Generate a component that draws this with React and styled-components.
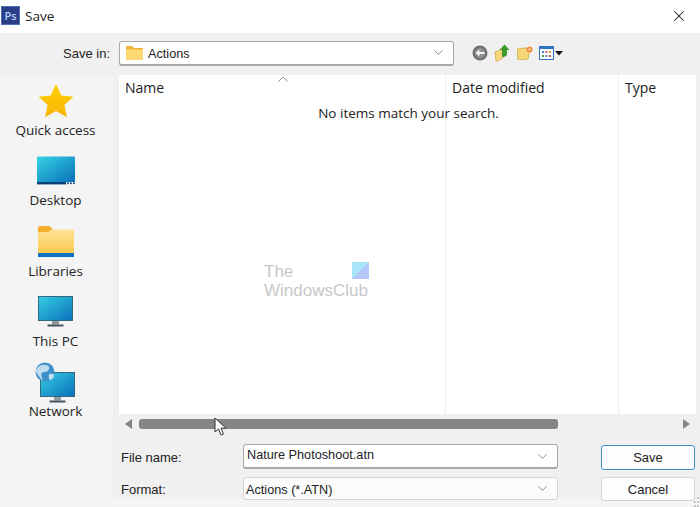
import React from 'react';
import styled, { createGlobalStyle } from 'styled-components';
import { ChevronDown, X } from 'lucide-react';

const GlobalStyle = createGlobalStyle`
  html, body {
    margin: 0;
    padding: 0;
    background: #f0f0f0;
  }
  * {
    box-sizing: border-box;
  }
`;

const Dialog = styled.div`
  width: 700px;
  height: 507px;
  display: flex;
  flex-direction: column;
  position: relative;
  overflow: hidden;
  background: #f0f0f0;
  color: #222;
  font-family: 'Open Sans', 'Liberation Sans', sans-serif;
  font-size: 13.5px;
`;

const TitleBar = styled.div`
  height: 33px;
  flex: none;
  display: flex;
  align-items: center;
  gap: 5px;
  padding: 0 12px 2px 1px;
  background: #fff;
`;

const AppIcon = styled.div`
  width: 19px;
  height: 19px;
  display: flex;
  align-items: center;
  justify-content: center;
  background: #2b3d86;
  border: 1px solid #4a6fb5;
  color: #b3d3ff;
  font-size: 11px;
  font-weight: 600;
  line-height: 1;
`;

const TitleText = styled.span`
  flex: 1;
  font-size: 13.5px;
`;

const CloseIcon = styled(X)`
  width: 18px;
  height: 18px;
  color: #222;
`;

const Toolbar = styled.div`
  height: 42px;
  flex: none;
  display: flex;
  align-items: center;
  padding-bottom: 2px;
`;

const RowLabel = styled.label`
  width: ${(p) => p.$width}px;
  flex: none;
  padding-top: ${(p) => p.$drop || 0}px;
  font-family: 'Liberation Sans', sans-serif;
  font-size: 13px;
  color: #222;
  text-align: ${(p) => p.$align || 'left'};
`;

const Combo = styled.div`
  width: ${(p) => p.$width}px;
  height: ${(p) => p.$height}px;
  flex: none;
  display: flex;
  align-items: center;
  gap: 5px;
  margin-left: ${(p) => p.$offset || 0}px;
  padding: 0 7px 0 ${(p) => p.$pad || 5}px;
  background: ${(p) => (p.$soft ? '#fbfbfb' : '#fff')};
  border: 1px solid ${(p) => (p.$soft ? '#d4d4d4' : '#a9a9a9')};
  border-bottom-width: ${(p) => (p.$soft ? 1 : 2)}px;
  border-radius: 3px;
  font-family: 'Liberation Sans', sans-serif;
  font-size: 12.7px;
  color: #222;
`;

const ComboText = styled.span`
  flex: 1;
  white-space: nowrap;
  padding-top: ${(p) => p.$top || 0}px;
  padding-bottom: ${(p) => p.$bottom || 0}px;
`;

const Chevron = styled(ChevronDown)`
  width: 15px;
  height: 15px;
  color: #666;
`;

const ToolIcons = styled.div`
  display: flex;
  align-items: center;
  gap: 6px;
  margin-left: 18px;
`;

const Body = styled.div`
  flex: 1;
  display: flex;
  min-height: 0;
`;

const Sidebar = styled.nav`
  width: 113px;
  flex: none;
  display: flex;
  flex-direction: column;
  background: #f4f4f4;
  padding: 6px 2px 0 0;
`;

const Place = styled.div`
  height: 70.3px;
  display: flex;
  flex-direction: column;
  align-items: center;
  color: #222;
  font-size: 13.5px;
  line-height: 18px;
`;

const PlaceGlyph = styled.div`
  height: 40px;
  display: flex;
  align-items: center;
  justify-content: center;
`;

const Main = styled.div`
  flex: 1;
  display: flex;
  flex-direction: column;
  padding-left: 6px;
  min-width: 0;
  background: linear-gradient(#f0f0f0 0 423px, #f4f4f4 423px);
`;

const FileList = styled.div`
  height: 339px;
  width: 577px;
  flex: none;
  display: grid;
  grid-template-columns: 326px 173px 78px;
  background: #fff;
  position: relative;
`;

const Column = styled.div`
  padding: 3px 0 0 6px;
  border-left: ${(p) => (p.$first ? 'none' : '1px solid #efefef')};
  font-size: 14px;
  line-height: 20px;
  color: #222;
`;

const SortCaret = styled.svg`
  position: absolute;
  left: 159px;
  top: 1px;
`;

const EmptyNote = styled.div`
  position: absolute;
  left: 0;
  right: 0;
  top: 28px;
  text-align: center;
  font-size: 13.5px;
  line-height: 20px;
  color: #222;
  transform: translateX(1px);
`;

const Scrollbar = styled.div`
  height: 19px;
  width: 577px;
  flex: none;
  display: flex;
  align-items: center;
  padding: 0 6px;
`;

const ScrollThumbTrack = styled.div`
  flex: 1;
  padding: 0 125px 0 7px;
`;

const ScrollThumb = styled.div`
  height: 10px;
  background: #858585;
  border-radius: 3px;
`;

const ScrollArrow = styled.div`
  width: 0;
  height: 0;
  border-top: 5px solid transparent;
  border-bottom: 5px solid transparent;
  ${(p) =>
    p.$right
      ? 'border-left: 7px solid #858585;'
      : 'border-right: 7px solid #858585;'}
`;

const Footer = styled.div`
  display: flex;
  padding-top: 11px;
`;

const FormRows = styled.div`
  width: 438px;
  display: flex;
  flex-direction: column;
  gap: 8px;
  padding-left: 2px;
`;

const FormRow = styled.div`
  display: flex;
  align-items: center;
`;

const Buttons = styled.div`
  margin-left: 44px;
  display: flex;
  flex-direction: column;
  gap: 7px;
  padding-top: 1px;
`;

const Button = styled.button`
  width: 94px;
  height: ${(p) => (p.$primary ? 25 : 24)}px;
  padding: 0;
  background: #fdfdfd;
  border: 1px solid ${(p) => (p.$primary ? '#3f8fc4' : '#d2d2d2')};
  border-radius: 3px;
  font-family: 'Liberation Sans', sans-serif;
  font-size: 13px;
  color: #222;
`;

const Watermark = styled.div`
  position: absolute;
  left: 264px;
  top: 262px;
  width: 104px;
  color: #c8c8c8;
  font-size: 17px;
  line-height: 19px;
  font-family: 'Liberation Sans', sans-serif;
  font-weight: 400;
`;

const WatermarkLogo = styled.svg`
  position: absolute;
  left: 88px;
  top: 0;
`;

const CursorIcon = styled.svg`
  position: absolute;
  left: 214px;
  top: 417px;
`;

const ResizeGrip = styled.svg`
  position: absolute;
  right: 0;
  bottom: 0;
`;

const Star = () => (
  <svg width="36" height="36" viewBox="0 0 36 36">
    <defs>
      <linearGradient id="starFill" x1="0" y1="0" x2="0" y2="1">
        <stop offset="0" stopColor="#ffd400" />
        <stop offset="1" stopColor="#f9b208" />
      </linearGradient>
    </defs>
    <path
      d="M18 1l5.300 11.400 12 1.300-8.900 8.200 2.500 12.300L18 27.900 7.100 34.200l2.500-12.300L.7 13.700l12-1.300z"
      fill="url(#starFill)"
    />
  </svg>
);

const DesktopGlyph = () => (
  <svg width="40" height="30" viewBox="0 0 40 30">
    <defs>
      <linearGradient id="desktopFill" x1="0" y1="0" x2="1" y2="1">
        <stop offset="0" stopColor="#35d3e6" />
        <stop offset="1" stopColor="#0a6fb8" />
      </linearGradient>
    </defs>
    <path d="M1 1.500Q1 .5 2 .5h36q1 0 1 1V26H1z" fill="url(#desktopFill)" />
    <rect x="1" y="26" width="29" height="2.400" fill="#0b3f77" />
    <rect x="31" y="26.400" width="1.700" height="1.700" fill="#0b3f77" />
    <rect x="34" y="26.400" width="1.700" height="1.700" fill="#0b3f77" />
    <rect x="37" y="26.400" width="1.700" height="1.700" fill="#0b3f77" />
  </svg>
);

const LibraryGlyph = () => (
  <svg width="36" height="32" viewBox="0 0 36 32">
    <defs>
      <linearGradient id="libFill" x1="0" y1="0" x2="0" y2="1">
        <stop offset="0" stopColor="#ffe39a" />
        <stop offset="1" stopColor="#fbc94f" />
      </linearGradient>
    </defs>
    <path d="M0 2q0-2 2-2h9l4 3-4 4H0z" fill="#f2b02c" />
    <path d="M0 6h10l4-2.500h21q1 0 1 1V27H0z" fill="url(#libFill)" />
    <rect y="27" width="36" height="4" fill="#0b72c4" />
  </svg>
);

const Monitor = ({ id }) => (
  <>
    <defs>
      <linearGradient id={id} x1="0" y1="0" x2="1" y2="1">
        <stop offset="0" stopColor="#35cfe2" />
        <stop offset="1" stopColor="#0a70ba" />
      </linearGradient>
    </defs>
    <rect x="0.500" y="0.500" width="34" height="24" fill={`url(#${id})`} stroke="#33677f" />
    <rect x="14" y="25" width="7" height="3.500" fill="#8e9aa3" />
    <rect x="9.500" y="28.500" width="16" height="2" fill="#46525a" />
  </>
);

const PcGlyph = () => (
  <svg width="35" height="31" viewBox="0 0 35 31">
    <Monitor id="pcFill" />
  </svg>
);

const NetworkGlyph = () => (
  <svg width="41" height="41" viewBox="0 0 41 41">
    <g transform="translate(5 10)">
      <Monitor id="netFill" />
    </g>
    <circle cx="10" cy="10" r="9.500" fill="#3f8fc9" />
    <path d="M3 5q4-3 8-2t3 4-5 3-2 6-4-3-2-5zM14 12q4-1 5 1t-3 5q-3 0-2-6z" fill="#d8ebf7" opacity="0.85" />
  </svg>
);

const FolderSmall = () => (
  <svg width="17" height="14" viewBox="0 0 17 14">
    <path d="M0 1q0-1 1-1h5l2 2h8q1 0 1 1v2H0z" fill="#eeb43a" />
    <rect y="3.500" width="17" height="10.500" rx="0.600" fill="#fdd873" />
  </svg>
);

const BackIcon = () => (
  <svg width="16" height="16" viewBox="0 0 16 16">
    <circle cx="8" cy="8" r="7.500" fill="#6e6e6e" />
    <circle cx="8" cy="8" r="5.400" fill="#8e8e8e" />
    <path d="M3.500 8l4-3.500V7h5v2h-5v2.500z" fill="#f4f4f4" />
  </svg>
);

const UpIcon = () => (
  <svg width="17" height="18" viewBox="0 0 17 18">
    <path d="M1 8l8-3v9l-7 3.500z" fill="#f6d777" stroke="#c9a33f" strokeWidth="0.700" />
    <path d="M8 13V6H5.500L10.500.5 15.500 6H13v4q0 3-5 3z" fill="#3f9a2d" />
  </svg>
);

const NewFolderIcon = () => (
  <svg width="16" height="14" viewBox="0 0 16 14">
    <path d="M0 3l8-1 5 1-2 10-10 1z" fill="#f6d777" stroke="#c9a33f" strokeWidth="0.700" />
    <circle cx="12.500" cy="3.500" r="3" fill="#ee8a3a" />
    <circle cx="12.500" cy="3.500" r="1.100" fill="#fff2d8" />
  </svg>
);

const ViewsIcon = () => (
  <svg width="24" height="14" viewBox="0 0 24 14">
    <rect x="0.500" y="0.500" width="14" height="13" fill="#fff" stroke="#2f74c0" />
    <rect x="0.500" y="0.500" width="14" height="2.500" fill="#2f74c0" />
    <rect x="3" y="5" width="2" height="2" fill="#3a7bd5" />
    <rect x="6.500" y="5" width="2" height="2" fill="#d55a9a" />
    <rect x="10" y="5" width="2" height="2" fill="#e0a030" />
    <rect x="3" y="9" width="2" height="2" fill="#42a050" />
    <rect x="6.500" y="9" width="2" height="2" fill="#3a7bd5" />
    <rect x="10" y="9" width="2" height="2" fill="#d05050" />
    <path d="M16 5h8l-4 4.500z" fill="#111" />
  </svg>
);

const places = [
  { label: 'Quick access', glyph: <Star /> },
  { label: 'Desktop', glyph: <DesktopGlyph /> },
  { label: 'Libraries', glyph: <LibraryGlyph /> },
  { label: 'This PC', glyph: <PcGlyph /> },
  { label: 'Network', glyph: <NetworkGlyph /> },
];

const App = () => {
  return (
    <>
      <GlobalStyle />
      <Dialog>
        <TitleBar>
          <AppIcon>Ps</AppIcon>
          <TitleText>Save</TitleText>
          <CloseIcon strokeWidth={1.4} />
        </TitleBar>

        <Toolbar>
          <RowLabel $width={110} $align="right">Save in:</RowLabel>
          <Combo $width={335} $height={25} $offset={9} $pad={6}>
            <FolderSmall />
            <ComboText $top={2}>Actions</ComboText>
            <Chevron strokeWidth={1.2} />
          </Combo>
          <ToolIcons>
            <BackIcon />
            <UpIcon />
            <NewFolderIcon />
            <ViewsIcon />
          </ToolIcons>
        </Toolbar>

        <Body>
          <Sidebar>
            {places.map((place) => (
              <Place key={place.label}>
                <PlaceGlyph>{place.glyph}</PlaceGlyph>
                {place.label}
              </Place>
            ))}
          </Sidebar>

          <Main>
            <FileList>
              <Column $first>Name</Column>
              <Column>Date modified</Column>
              <Column>Type</Column>
              <SortCaret width="10" height="6" viewBox="0 0 10 6">
                <path d="M.5 5.500L5 1l4.500 4.500" fill="none" stroke="#8a8a8a" />
              </SortCaret>
              <EmptyNote>No items match your search.</EmptyNote>
            </FileList>

            <Scrollbar>
              <ScrollArrow />
              <ScrollThumbTrack>
                <ScrollThumb />
              </ScrollThumbTrack>
              <ScrollArrow $right />
            </Scrollbar>

            <Footer>
              <FormRows>
                <FormRow>
                  <RowLabel $width={122} $drop={2}>File name:</RowLabel>
                  <Combo $width={315} $height={25} $pad={3}>
                    <ComboText $bottom={2}>Nature Photoshoot.atn</ComboText>
                    <Chevron strokeWidth={1.2} />
                  </Combo>
                </FormRow>
                <FormRow>
                  <RowLabel $width={122} $drop={2}>Format:</RowLabel>
                  <Combo $width={315} $height={23} $pad={2} $soft>
                    <ComboText $top={2}>Actions (*.ATN)</ComboText>
                    <Chevron strokeWidth={1.2} />
                  </Combo>
                </FormRow>
              </FormRows>
              <Buttons>
                <Button $primary>Save</Button>
                <Button>Cancel</Button>
              </Buttons>
            </Footer>
          </Main>
        </Body>

        <Watermark>
          The
          <br />
          WindowsClub
          <WatermarkLogo width="17" height="17" viewBox="0 0 17 17">
            <rect width="17" height="17" fill="#a9e4fb" />
            <path d="M0 17L17 0v17z" fill="#b6c8fa" />
          </WatermarkLogo>
        </Watermark>

        <CursorIcon width="14" height="20" viewBox="0 0 14 20">
          <path
            d="M1 1v14l3.500-3 2.500 6 2.500-1-2.500-5.800H12z"
            fill="#fff"
            stroke="#333"
            strokeWidth="1"
          />
        </CursorIcon>

        <ResizeGrip width="6" height="10" viewBox="0 0 6 10">
          <rect x="3" y="0" width="2" height="2" fill="#c8c8c8" />
          <rect x="0" y="4" width="2" height="2" fill="#c8c8c8" />
          <rect x="3" y="4" width="2" height="2" fill="#c8c8c8" />
          <rect x="0" y="8" width="2" height="2" fill="#c8c8c8" />
          <rect x="3" y="8" width="2" height="2" fill="#c8c8c8" />
        </ResizeGrip>
      </Dialog>
    </>
  );
};

export default App;
